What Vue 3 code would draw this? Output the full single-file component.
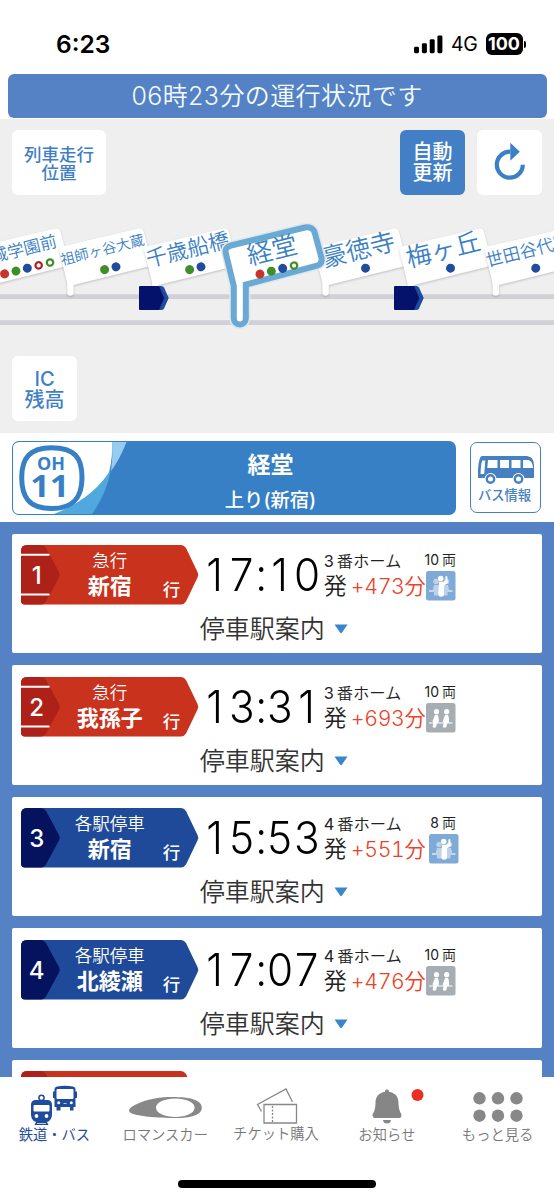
<script setup>
const GREEN = '#3f8f29'
const RED = '#c9332a'
const BLUE = '#1f4c9c'

const stations = [
  { name: '成城学園前', cx: 27.3, tx: 15.5, ty: 250.5, size: 16.8, dots: [[RED, 1], [GREEN, 1], [BLUE, 1], ['#b02020', 0], [GREEN, 0]] },
  { name: '祖師ヶ谷大蔵', cx: 110.3, tx: 102.3, ty: 249.5, size: 14.3, dots: [[GREEN, 1], [BLUE, 1]] },
  { name: '千歳船橋', cx: 195.3, tx: 187.5, ty: 249, size: 21.3, dots: [[GREEN, 1], [BLUE, 1]] },
  { name: '豪徳寺', cx: 365.5, tx: 358, ty: 249, size: 25, dots: [[BLUE, 1]] },
  { name: '梅ヶ丘', cx: 450.5, tx: 443, ty: 249, size: 25.3, dots: [[BLUE, 1]] },
  { name: '世田谷代田', cx: 535.7, tx: 528, ty: 250, size: 17.3, dots: [[BLUE, 1]] },
]
const current = [[RED, 1], [GREEN, 1], [BLUE, 1], [GREEN, 0]]

const trains = [
  { no: 1, kind: '急行', dest: '新宿', time: '17:10', platform: 3, delay: 473, cars: 10, busy: true, express: true },
  { no: 2, kind: '急行', dest: '我孫子', time: '13:31', platform: 3, delay: 693, cars: 10, busy: false, express: true },
  { no: 3, kind: '各駅停車', dest: '新宿', time: '15:53', platform: 4, delay: 551, cars: 8, busy: true, express: false },
  { no: 4, kind: '各駅停車', dest: '北綾瀬', time: '17:07', platform: 4, delay: 476, cars: 10, busy: false, express: false },
]
const dotX = (i, n) => (i - (n - 1) / 2) * 11.7
</script>

<template>
  <div class="screen">
    <header class="status">
      <span class="clock">6:23</span>
      <span class="right">
        <svg class="signal" width="30" height="20" viewBox="0 0 30 20">
          <rect x="0" y="12.8" width="5" height="6.4" rx="1.4" />
          <rect x="7.9" y="9.2" width="5" height="10" rx="1.4" />
          <rect x="15.7" y="5.2" width="5" height="14" rx="1.4" />
          <rect x="23.4" y="1.4" width="5" height="17.8" rx="1.4" />
        </svg>
        <span class="net">4G</span>
        <span class="battery">100</span>
        <i class="cap"></i>
      </span>
    </header>
    <div class="banner"><span>06時23分の運行状況です</span></div>

    <section class="map">
      <svg class="line" width="554" height="314" viewBox="0 119 554 314">
        <rect x="0" y="294.3" width="554" height="4.8" fill="#d0d0d6" />
        <rect x="0" y="320.2" width="554" height="4.8" fill="#d0d0d6" />
        <g v-for="s in stations" :key="s.name">
          <path
            class="sign" :transform="`translate(${s.cx - 110} 0)`"
            d="M59 251Q58 247.500 62 246.500L137 228.800Q142 227.800 143.500 232L152 265.500L73.300 285V292.500a3.200 3.200 0 0 1-6.400 0V283Z"
          />
          <g :transform="`translate(${s.cx} 268.200) rotate(-14)`">
            <circle
              v-for="(d, i) in s.dots" :key="i" :cx="dotX(i, s.dots.length)" cy="0" :r="d[1] ? 4.500 : 3.200"
              :fill="d[1] ? d[0] : '#fff'" :stroke="d[0]" :stroke-width="d[1] ? 0 : 2.200"
            />
          </g>
          <text class="name" text-anchor="middle" :font-size="s.size" :transform="`translate(${s.tx} ${s.ty}) rotate(-14)`" :y="s.size * 0.38">{{ s.name }}</text>
        </g>
        <path
          class="glow"
          d="M226 254Q224 247.500 231 245.500L305 227.500Q312 226 314.500 232L321.500 258Q322.500 264 317 265.700L245.800 284.500V318.500a6 6 0 0 1-12 0V286Z"
        />
        <path
          class="current"
          d="M226 254Q224 247.500 231 245.500L305 227.500Q312 226 314.500 232L321.500 258Q322.500 264 317 265.700L245.800 284.500V318.500a6 6 0 0 1-12 0V286Z"
        />
        <g transform="translate(277 269.800) rotate(-14)">
          <circle
            v-for="(d, i) in current" :key="i" :cx="dotX(i, 4)" cy="0" :r="d[1] ? 4.500 : 3.200"
            :fill="d[1] ? d[0] : '#fff'" :stroke="d[0]" :stroke-width="d[1] ? 0 : 2.200"
          />
        </g>
        <text class="name" text-anchor="middle" font-size="25.500" transform="translate(272 250) rotate(-14)" y="9">経堂</text>
        <g v-for="x in [139, 394]" :key="x" :transform="`translate(${x} 286)`">
          <path d="M14 0H22.500Q24 0 25 1.500L29.700 12L25 22.500Q24 24 22.500 24H14Z" fill="#1f4c9c" />
          <path d="M1 0H20L25.300 12L20 24H1Q0 24 0 23V1Q0 0 1 0Z" fill="#04126b" />
        </g>
      </svg>
      <div class="buttons">
        <button class="btn wide">列車走行<br>位置</button>
        <button class="btn auto">自動<br>更新</button>
        <button class="btn">
          <svg width="34" height="42" viewBox="0 0 34 42">
            <path d="M29.800 22.700A13 13 0 1 1 17.500 9.700" fill="none" stroke="#3a80c4" stroke-width="4.200" />
            <path d="M17.300 .800L26.800 9.800L17.300 18.800Z" fill="#3a80c4" />
          </svg>
        </button>
      </div>
      <button class="btn ic">IC<br>残高</button>
    </section>

    <section class="station">
      <div class="bar">
        <svg class="mark" width="122" height="74" viewBox="0 0 122 74">
          <rect x=".500" y=".500" width="150" height="73" rx="6.500" fill="#3780c6" />
          <path d="M7.500 1H100Q102 40 76 73H7.500Q1 73 1 66.500V7.500Q1 1 7.500 1Z" fill="#fff" />
          <path d="M100 1H114.500Q108 18 99 30Q101 16 100 1Z" fill="#96ccf0" />
          <path d="M99 28Q82 57 42 73H80Q95 52 99 28Z" fill="#4fa9de" />
          <path
            d="M39.500 6.700C63 6.700 70 17 70 36.500S62 67.500 39.500 67.500S9.700 56 9.700 36.500S18 6.700 39.500 6.700Z"
            fill="#fff" stroke="#3780c6" stroke-width="5"
          />
          <text x="39" y="28.700" text-anchor="middle" font-size="18" textLength="28" lengthAdjust="spacingAndGlyphs">OH</text>
          <text x="37.800" y="56" text-anchor="middle" font-size="31" textLength="39" lengthAdjust="spacingAndGlyphs">11</text>
        </svg>
        <strong>経堂</strong>
        <em>上り(新宿)</em>
      </div>
      <button class="bus">
        <svg width="58" height="32" viewBox="0 0 58 32">
          <path d="M5 1H50Q57 2 57 10V23H1V14Q2 1 5 1Z" fill="#4580c0" />
          <path d="M5.200 5.500H8.300L7.200 19H3.600Q3.600 10 5.200 5.500Z" fill="#fff" />
          <path d="M11 5H20.500V13H10.300ZM23 5H32V13H23ZM34.500 5H43.500V13H34.500ZM46 5H51.500Q55.500 6 56 13H46Z" fill="#fff" />
          <g fill="#fff"><circle cx="13.500" cy="24" r="6" /><circle cx="41.500" cy="24" r="6" /></g>
          <g fill="#fff" stroke="#4580c0" stroke-width="2.400"><circle cx="13.500" cy="24" r="3.700" /><circle cx="41.500" cy="24" r="3.700" /></g>
        </svg>
        <span>バス情報</span>
      </button>
    </section>

    <main class="list">
      <article v-for="t in trains" :key="t.no" class="card">
        <svg class="badge" width="178" height="60" viewBox="0 0 178 60">
          <path d="M6 0H160Q163 0 165 3L176.500 27Q178 29.700 176.500 32.500L165 56.500Q163 59.500 160 59.500H4Q0 59.500 0 55.500V6Q0 0 6 0Z" :fill="t.express ? '#c9321d' : '#1f4a99'" />
          <path d="M6 0H20Q23 0 25 3L38 27Q39.400 29.700 38 32.500L25 56.500Q23 59.500 20 59.500H4Q0 59.500 0 55.500V6Q0 0 6 0Z" :fill="t.express ? '#ad2118' : '#05135f'" />
          <path v-if="t.express" d="M0 9.700H28.500M0 49.500H28.500" stroke="#fff" stroke-width="2" />
          <text class="no" x="15.700" y="38.500">{{ t.no }}</text>
          <text class="kind" x="88.700" y="22">{{ t.kind }}</text>
          <text class="dest" x="88.700" y="48.500">{{ t.dest }}</text>
          <text class="yuki" x="150.500" y="50.500">行</text>
        </svg>
        <div class="time"><span v-for="(c, i) in t.time" :key="i" :class="{ colon: c === ':' }">{{ c }}</span></div>
        <div class="info">
          <div class="platform"><b>{{ t.platform }}</b>番ホーム</div>
          <div class="delay"><span>発</span><span class="late">+{{ t.delay }}分</span></div>
        </div>
        <div class="cars" :class="{ short: t.cars === 8 }">
          <div class="count"><b>{{ t.cars }}</b>両</div>
          <svg width="30" height="30" viewBox="0 0 30 30">
            <rect width="29.500" height="29.500" rx="2.500" :fill="t.busy ? '#7fa9d6' : '#a6adb3'" />
            <path d="M3 20H26.500" stroke="#d8e4f0" stroke-width="1.600" />
            <g v-if="t.busy">
              <g fill="#bcd3ea">
                <circle cx="10" cy="10.500" r="2.700" /><circle cx="20.500" cy="10.500" r="2.700" />
                <path d="M8 14H13V24.500H8V21H6.200ZM17.500 14H22L23.500 21H21.500V24.500H17.500Z" />
              </g>
              <g fill="#fff">
                <circle cx="14.700" cy="7.500" r="2.800" />
                <path d="M13 10.800H17L19.600 9.500L19.300 5.500L21.200 5L21.800 12L18 14.500V24Q17.500 26 15 25.800Q12.500 25.800 12.300 23.500Z" />
              </g>
            </g>
            <g v-else fill="#fff">
              <g v-for="x in [10.500, 20.700]" :key="x" :transform="`translate(${x} 0)`">
                <circle cx="0" cy="8.700" r="2.600" />
                <path d="M-1.600 12H1Q2.500 13 2.300 19.500L.300 20.500L-.300 24Q-2 25.500-4 24L-3 20L-4 18.300Z" />
              </g>
            </g>
          </svg>
        </div>
        <div class="stops">停車駅案内<svg width="14" height="10" viewBox="0 0 14 10"><path d="M.500 .500H13.500L8 8.500Q7 9.800 6 8.500Z" fill="#3a86cb" /></svg></div>
      </article>
      <article class="card">
        <svg class="badge" width="178" height="60" viewBox="0 0 178 60">
          <path d="M6 0H160Q163 0 165 3L178 30H0V6Q0 0 6 0Z" fill="#c9321d" />
          <path d="M6 0H20Q23 0 25 3L38 30H0V6Q0 0 6 0Z" fill="#ad2118" />
        </svg>
      </article>
    </main>

    <nav class="tabs">
      <div class="tab active">
        <svg width="110" height="50" viewBox="0 0 110 50">
          <g fill="#1f4c9c">
            <path d="M58 9.500Q66 8 74 9.500Q76.500 10 76.500 12V14.500H78V21H76.500V30H74.500V33.500H71V30H61.500V33.500H57.500V30H55.500V21H54V14.500H55.500V12Q55.500 10 58 9.500Z" />
            <path d="M36 23H49Q53 23.500 53 28V37Q53 43.500 48 45L49.500 48H35.500L37 45Q32 43.500 32 37V28Q32 23.500 36 23Z" />
          </g>
          <circle cx="42.500" cy="20.800" r="2.600" fill="#fff" stroke="#1f4c9c" stroke-width="1.500" />
          <g fill="#fff">
            <rect x="57.500" y="12" width="17" height="10" rx="1" /><rect x="34.500" y="28" width="16" height="6.500" rx="1" />
            <circle cx="59.700" cy="25.800" r="1.500" /><circle cx="72.300" cy="25.800" r="1.500" />
            <circle cx="37.500" cy="39" r="1.900" /><circle cx="47.500" cy="39" r="1.900" />
          </g>
          <path d="M38 46.500H47M64.500 26.500H67.500" stroke="#fff" stroke-width=".7" />
        </svg>
        <span>鉄道・バス</span>
      </div>
      <div class="tab">
        <svg width="110" height="50" viewBox="0 0 110 50">
          <g transform="translate(.8 0)">
            <path d="M18.300 34Q17.500 31 25 27.500C37 21.500 51 20 62 20C79 20 91 23 91 30.500C91 39 78 41.300 62 41C44 40.700 19.500 39 18.300 34Z" fill="#888" />
            <ellipse cx="64.500" cy="30.700" rx="19.300" ry="9.300" fill="#fff" />
          </g>
        </svg>
        <span>ロマンスカー</span>
      </div>
      <div class="tab ticket">
        <svg width="110" height="50" viewBox="0 0 110 50">
          <g fill="none" stroke="#888" stroke-width="1.300">
            <path d="M43 27.500H75.500V46H43ZM40.500 34.500L36.500 27.500L65 12L71.500 25" />
            <path d="M51.500 29V45" stroke-dasharray="2 1.500" />
          </g>
        </svg>
        <span>チケット購入</span>
      </div>
      <div class="tab">
        <svg width="110" height="50" viewBox="0 0 110 50">
          <path d="M53 14.800Q52.800 12.300 55 12.300T57 14.800C63.500 16 66.500 20 66.500 26Q66.500 33 69.300 37Q70 41 67 41H43Q40 41 40.700 37Q43.500 33 43.500 26C43.500 20 46.500 16 53 14.800Z" fill="#868686" />
          <path d="M51 43H59Q58.500 46.500 55 46.500T51 43Z" fill="#868686" />
          <circle cx="85.500" cy="18" r="6" fill="#ea2f22" />
        </svg>
        <span>お知らせ</span>
      </div>
      <div class="tab">
        <svg width="110" height="50" viewBox="0 0 110 50">
          <g fill="#888">
            <circle v-for="i in 6" :key="i" :cx="36.500 + ((i - 1) % 3) * 18.500" :cy="i > 3 ? 38.700 : 21.300" r="6.200" />
          </g>
        </svg>
        <span>もっと見る</span>
      </div>
      <i class="home"></i>
    </nav>
  </div>
</template>

<style>
body { margin: 0; background: #fff; }
</style>

<style scoped>
.screen { width: 554px; height: 1200px; overflow: hidden; display: flex; flex-direction: column; font-family: Inter, "Noto Sans CJK JP", sans-serif; background: #fff; }
.screen * { box-sizing: border-box; }
i, em { font-style: normal; }
button { font: inherit; padding: 0; border: 0; }

.status { height: 74px; flex: none; padding: 28px 28px 0 56px; display: flex; justify-content: space-between; align-items: flex-start; }
.clock { font-size: 24.500px; font-weight: 600; line-height: 32px; color: #000; }
.right { display: flex; align-items: center; height: 32px; }
.net { font-size: 19.500px; margin: 0 8px 0 7px; letter-spacing: -.3px; }
.battery { width: 37px; height: 22px; border-radius: 6px; background: #000; color: #fff; font-size: 18px; font-weight: 700; line-height: 22px; text-align: center; }
.cap { width: 2.500px; height: 7px; margin-left: 1px; border-radius: 0 3px 3px 0; background: #000; }

.banner { flex: none; height: 44px; margin: 0 7.500px 1px; border-radius: 6px; background: #5582c4; color: #f4fbff; display: flex; align-items: center; justify-content: center; font-size: 25px; font-weight: 350; letter-spacing: .4px; white-space: nowrap; line-height: 44px; }

.map { position: relative; flex: none; height: 314px; background: #efefef; padding: 11px 12px; }
.line { position: absolute; left: 0; top: 0; }
.sign { fill: #fff; filter: drop-shadow(0 1px 1px rgba(0, 0, 0, .2)); }
.name { fill: #3a80c4; font-family: "Noto Sans CJK JP", sans-serif; font-weight: 350; }
.glow { fill: none; stroke: #dde8ee; stroke-width: 9; }
.current { fill: #fff; stroke: #6aa9d4; stroke-width: 6; }
.buttons { position: relative; display: flex; gap: 12px; }
.btn { width: 65px; height: 65px; border-radius: 6px; background: #fff; color: #3f7fc6; display: flex; align-items: center; justify-content: center; text-align: center; font-size: 20px; line-height: 21px; font-weight: 500; }
.wide { width: 94px; margin-right: auto; padding-top: 2px; font-size: 17.500px; line-height: 18px; }
.auto { background: #427fc5; color: #fff; padding-top: 1px; }
.ic { position: relative; margin-top: 161px; padding-top: 2px; }

.station { flex: none; height: 88.500px; padding: 7.500px 13px 0 12px; display: flex; justify-content: space-between; }
.bar { position: relative; width: 444px; height: 74px; border-radius: 7px; background: #3780c6; color: #fff; overflow: hidden; padding-left: 73px; display: flex; flex-direction: column; align-items: center; }
.mark { position: absolute; left: 0; top: 0; }
.mark text { font-family: "Open Sans", sans-serif; font-weight: 700; fill: #3780c6; }
.bar strong { font-size: 23px; line-height: 30px; margin-top: 9px; font-weight: 700; }
.bar em { font-size: 19.300px; line-height: 24px; margin-top: 8px; font-weight: 500; }
.bus { width: 71px; height: 71px; margin-top: 1.500px; border: 1px solid #4580c0; border-radius: 7px; background: #fff; color: #4580c0; font-size: 13.300px; font-weight: 500; line-height: 18px; display: flex; flex-direction: column; align-items: center; padding-top: 12px; }
.bus span { margin: -1px 2px 0 0; }

.list { flex: none; height: 555.500px; overflow: hidden; background: #5582c4; padding: 12px 12px 0; display: flex; flex-direction: column; gap: 12px; }
.card { flex: none; height: 119.500px; border-radius: 2px; background: #fff; padding: 11.500px 0 0 8.700px; display: grid; grid-template-columns: 180px 123px 100.300px 60px; grid-template-rows: 60px 48px; }
.badge text { fill: #fff; text-anchor: middle; }
.badge .no { font-size: 24px; font-weight: 500; }
.badge .kind { font-size: 17.500px; font-weight: 350; }
.badge .dest { font-size: 22px; font-weight: 700; }
.badge .yuki { font-size: 17.500px; font-weight: 500; }
.time { display: flex; font-size: 45.500px; font-weight: 300; line-height: 60px; color: #000; }
.time span { width: 27.300px; text-align: center; transform: scaleX(.93); }
.time .colon { width: 10.500px; }
.info { display: flex; flex-direction: column; color: #222; white-space: nowrap; }
.platform { font-size: 16.300px; line-height: 20px; margin-top: 6px; font-weight: 350; }
.platform b, .count b { font-weight: 400; margin-right: 3px; }
.delay { display: flex; font-size: 23px; line-height: 28px; font-weight: 350; margin-top: 1px; gap: 4px; }
.late { color: #ee4028; font-size: 21.300px; font-feature-settings: "tnum"; letter-spacing: -.3px; }
.cars { width: 32px; display: flex; flex-direction: column; align-items: flex-end; white-space: nowrap; }
.short svg { margin-right: -3px; }
.count { font-size: 14px; line-height: 20px; margin-top: 5px; margin-bottom: 1px; color: #222; font-weight: 350; }
.stops { grid-column: 1 / -1; padding-left: 179px; font-size: 25px; font-weight: 350; line-height: 49px; color: #333; }
.stops svg { margin-left: 9px; vertical-align: 4px; }

.tabs { position: relative; flex: none; height: 123px; display: flex; justify-content: center; background: #fff; padding-right: 2px; }
.tab { flex: none; width: 110.800px; display: flex; flex-direction: column; align-items: center; font-size: 14.300px; font-weight: 350; line-height: 20px; color: #777; white-space: nowrap; }
.tab svg { flex: none; margin-bottom: -2px; }
.active { color: #1f4c9c; font-weight: 400; }
.ticket span { margin-top: -1.500px; }
.home { position: absolute; left: 178px; top: 103px; width: 198px; height: 8px; border-radius: 4px; background: #000; }
</style>
